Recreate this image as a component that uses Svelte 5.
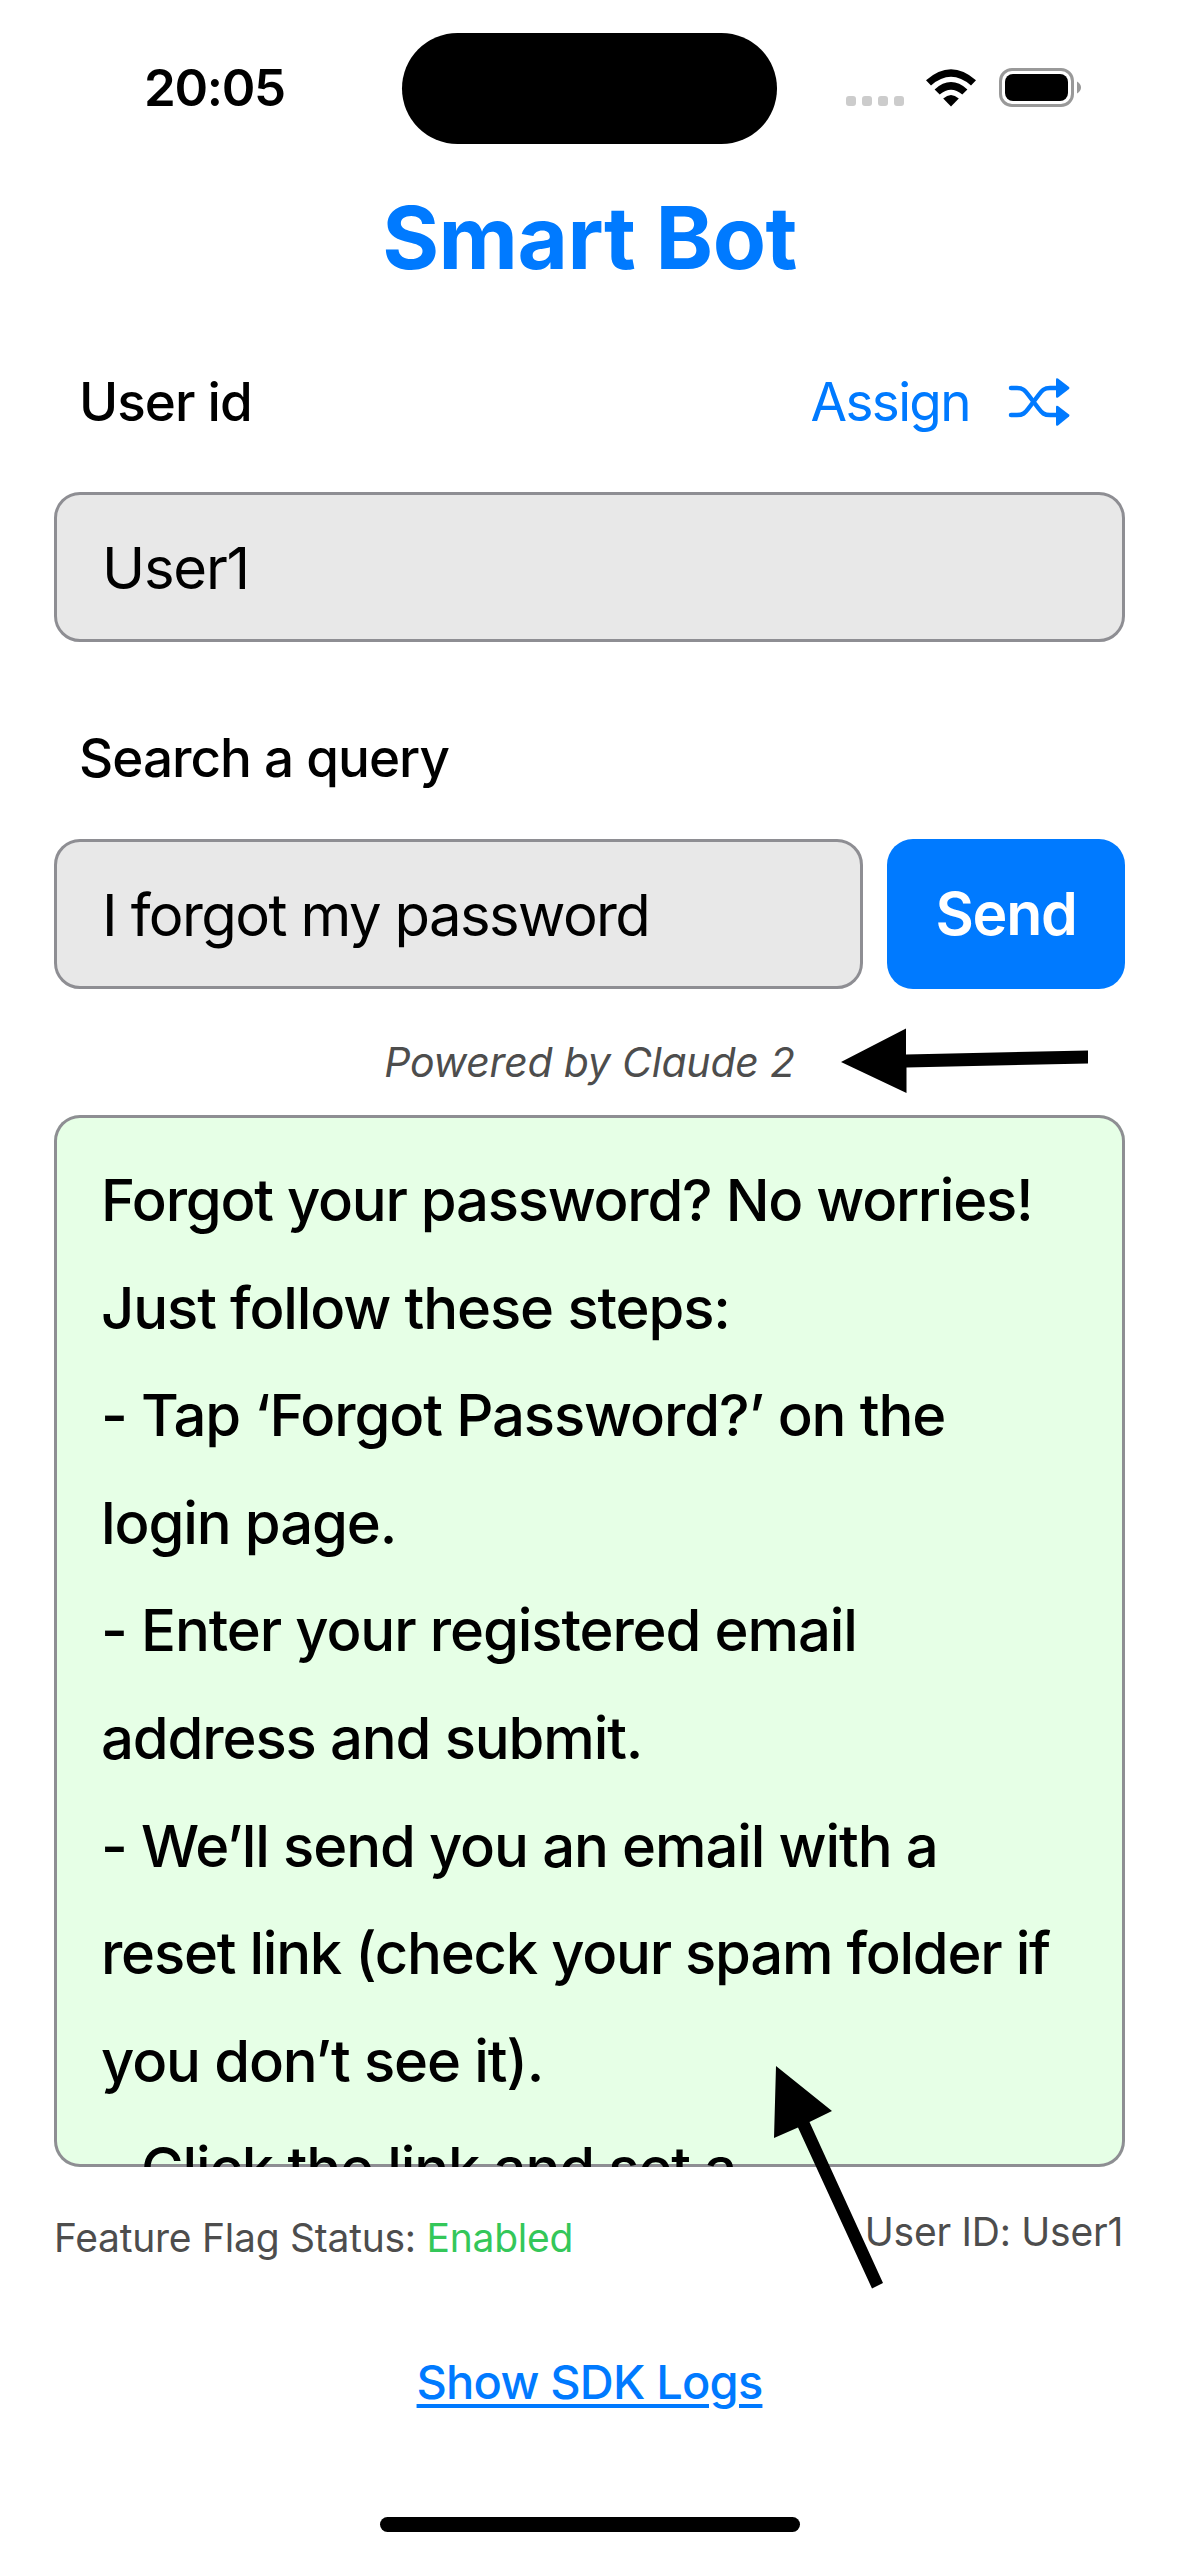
<script>
  const answer = [
    'Forgot your password? No worries!',
    'Just follow these steps:',
    '- Tap ‘Forgot Password?’ on the',
    'login page.',
    '- Enter your registered email',
    'address and submit.',
    '- We’ll send you an email with a',
    'reset link (check your spam folder if',
    'you don’t see it).',
    '- Click the link and set a'
  ];
</script>

<div class="screen">
  <header class="status">
    <div class="time">20:05</div>
    <div class="island"></div>
    <div class="indicators">
      <div class="cell"><i></i><i></i><i></i><i></i></div>
      <svg class="wifi" width="50" height="38" viewBox="0 0 50 38">
        <path d="M0 11.2Q25-10.800 50 11.200L45 16.500Q25-.800 5 16.500Z" />
        <path d="M8.600 20.400Q25 5.700 41.400 20.400L36.300 25.600Q25 16 13.700 25.600Z" />
        <path d="M17.200 29.600Q25 22.500 32.800 29.600L25 37.500Z" />
      </svg>
      <svg class="battery" width="83" height="40" viewBox="0 0 83 40">
        <rect x="1.500" y="1.500" width="72" height="36" rx="11.500" fill="none" stroke="#999" stroke-width="3" />
        <rect x="6" y="6" width="63" height="27" rx="8" />
        <path d="M78 13.500Q82 16 82 19.500T78 25.500Z" fill="#999" />
      </svg>
    </div>
  </header>

  <h1><span>Smart Bot</span></h1>

  <div class="label-row first">
    <span class="label user-label">User id</span>
    <button class="assign">
      <span>Assign</span>
      <svg width="62" height="50" viewBox="0 0 62 50">
        <g fill="none" stroke="currentColor" stroke-width="4.500" stroke-linecap="round">
          <path d="M3 11H9C15 11 17 13.500 20 17.500L31 32C34 36 36 38 42 38H48" />
          <path d="M3 38H9C15 38 17 36 20 32L31 17.500C34 13.500 36 11 42 11H48" />
        </g>
        <path d="M48 2.500Q48 .500 50 1.500L61 10Q62 11 61 12L50 20.500Q48 21.500 48 19.500Z" fill="currentColor" />
        <path d="M48 30Q48 28 50 29L61 37.500Q62 38.500 61 39.500L50 48.500Q48 49.500 48 47.500Z" fill="currentColor" />
      </svg>
    </button>
  </div>
  <div class="field"><span class="user-value">User1</span></div>

  <div class="label-row second"><span class="label query-label">Search a query</span></div>
  <div class="query-row">
    <div class="field"><span class="query-value">I forgot my password</span></div>
    <button class="send"><span>Send</span></button>
  </div>

  <p class="powered"><span>Powered by Claude 2</span></p>

  <div class="answer">
    {#each answer as line}
      <div class="line" class:wide={line.length > 32}><span>{line}</span></div>
    {/each}
  </div>

  <footer>
    <span class="flag">Feature Flag Status: <b>Enabled</b></span>
    <span class="uid">User ID: User1</span>
  </footer>
  <div class="logs"><span>Show SDK Logs</span></div>
  <div class="home"></div>

  <svg class="arrows" width="1179" height="2556" viewBox="0 0 1179 2556">
    <path d="M841 1062L906 1028.500V1054.500L1088 1050.500V1063.500L906.500 1067.500V1093Z" />
    <path d="M776 2066L832 2111L809.500 2122L883 2283L872 2288.500L798 2127.500L774 2138Z" />
  </svg>
</div>

<style>
  :global(body) {
    margin: 0;
    background: #fff;
  }
  .screen {
    position: relative;
    box-sizing: border-box;
    width: 1179px;
    height: 2556px;
    overflow: hidden;
    display: flex;
    flex-direction: column;
    padding: 0 54px;
    background: #fff;
    color: #000;
    font-family: Inter, "Liberation Sans", sans-serif;
    white-space: nowrap;
  }
  button {
    border: 0;
    padding: 0;
    background: none;
    font: inherit;
  }
  .status {
    flex: none;
    display: grid;
    grid-template-columns: 348px 375px 348px;
    align-items: center;
    height: 111px;
    margin-top: 33px;
  }
  .time {
    padding-left: 90px;
    font-size: 51px;
    font-weight: 600;
    line-height: 60px;
    letter-spacing: -1.3px;
    margin-top: -2px;
  }
  .island {
    height: 111px;
    border-radius: 56px;
    background: #000;
  }
  .indicators {
    display: flex;
    align-items: flex-start;
    height: 40px;
    margin-top: -2px;
    padding-left: 69px;
  }
  .cell {
    display: flex;
    gap: 6px;
    margin: 28px 22px 0 0;
  }
  .cell i {
    width: 10px;
    height: 10px;
    border-radius: 3px;
    background: #ccc;
  }
  .wifi {
    margin: 1px 23px 0 0;
  }
  h1 {
    flex: none;
    margin: 42px 0 0;
    height: 104px;
    font-size: 87px;
    line-height: 104px;
    font-weight: 700;
    letter-spacing: -0.5px;
    text-align: center;
    color: #007aff;
  }
  .label-row {
    flex: none;
    display: flex;
    justify-content: space-between;
    align-items: center;
    padding: 0 55px 0 25px;
  }
  .first {
    margin: 70px 0 48px;
    height: 84px;
  }
  .second {
    margin: 83px 0 48px;
    height: 66px;
  }
  .label {
    font-size: 53px;
    font-weight: 500;
    letter-spacing: -1px;
  }
  .assign {
    display: flex;
    align-items: center;
    gap: 38px;
    color: #007aff;
    font-size: 53px;
    letter-spacing: -1.6px;
  }
  .field {
    flex: 1 0 auto;
    box-sizing: border-box;
    display: flex;
    align-items: center;
    height: 150px;
    padding: 2px 0 0 45px;
    border: 3px solid #8e8e93;
    border-radius: 26px;
    background: #e8e8e8;
    font-size: 58px;
    letter-spacing: -1.6px;
  }
  .screen > .field {
    flex: none;
    letter-spacing: -1.2px;
  }
  .query-row {
    flex: none;
    display: flex;
    gap: 24px;
  }
  .send {
    width: 238px;
    height: 150px;
    padding-bottom: 2px;
    border-radius: 26px;
    background: #007aff;
    color: #fff;
    font-size: 59px;
    font-weight: 600;
    letter-spacing: -1.3px;
  }
  .powered {
    flex: none;
    margin: 48px 0 0;
    height: 50px;
    font-size: 41px;
    line-height: 50px;
    font-style: italic;
    letter-spacing: -0.22px;
    text-align: center;
    color: #4d4d4d;
  }
  .answer {
    flex: none;
    box-sizing: border-box;
    height: 1052px;
    margin-top: 28px;
    padding: 32px 0 0 47px;
    border-radius: 26px;
    box-shadow: inset 0 0 0 3px #8e8e93;
    overflow: hidden;
    background: #e6ffe6;
    font-size: 58px;
    font-weight: 500;
    letter-spacing: -1.12px;
  }
  .line {
    height: 107.600px;
    line-height: 107.600px;
  }
  .wide {
    letter-spacing: -1.24px;
  }
  footer {
    flex: none;
    display: flex;
    justify-content: space-between;
    align-items: flex-start;
    margin-top: 41px;
    height: 60px;
    font-size: 39px;
    line-height: 48px;
    letter-spacing: -0.25px;
    color: #4d4d4d;
  }
  .flag {
    margin-top: 6px;
  }
  .flag b {
    font-weight: 400;
    color: #34c759;
  }
  .uid {
    margin-right: 2px;
    letter-spacing: -0.25px;
  }
  .logs {
    flex: none;
    margin-top: 85px;
    font-size: 47px;
    font-weight: 500;
    line-height: 58px;
    letter-spacing: -0.8px;
    text-align: center;
    color: #007aff;
  }
  .logs span {
    text-decoration: underline;
    text-decoration-thickness: 4px;
    text-underline-offset: 5px;
  }
  .home {
    flex: none;
    align-self: center;
    width: 420px;
    height: 15px;
    margin-top: auto;
    margin-bottom: 24px;
    border-radius: 8px;
    background: #000;
  }
  .arrows {
    position: absolute;
    left: 0;
    top: 0;
  }
</style>
